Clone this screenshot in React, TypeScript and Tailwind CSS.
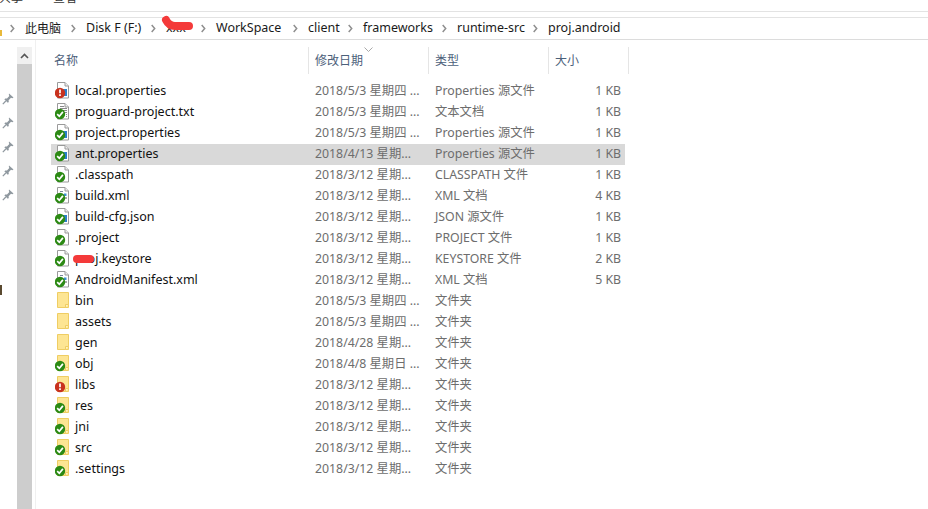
import React from "react";

type Kind = "props" | "txt" | "blank" | "xml" | "json" | "folder";
type Badge = "ok" | "err" | null;

const files: { name: React.ReactNode; date: string; type: string; size: string; kind: Kind; badge: Badge; selected?: boolean }[] = [
  { name: "local.properties", date: "2018/5/3 星期四 ...", type: "Properties 源文件", size: "1 KB", kind: "props", badge: "err" },
  { name: "proguard-project.txt", date: "2018/5/3 星期四 ...", type: "文本文档", size: "1 KB", kind: "txt", badge: "ok" },
  { name: "project.properties", date: "2018/5/3 星期四 ...", type: "Properties 源文件", size: "1 KB", kind: "props", badge: "ok" },
  { name: "ant.properties", date: "2018/4/13 星期...", type: "Properties 源文件", size: "1 KB", kind: "props", badge: "ok", selected: true },
  { name: ".classpath", date: "2018/3/12 星期...", type: "CLASSPATH 文件", size: "1 KB", kind: "blank", badge: "ok" },
  { name: "build.xml", date: "2018/3/12 星期...", type: "XML 文档", size: "4 KB", kind: "xml", badge: "ok" },
  { name: "build-cfg.json", date: "2018/3/12 星期...", type: "JSON 源文件", size: "1 KB", kind: "props", badge: "ok" },
  { name: ".project", date: "2018/3/12 星期...", type: "PROJECT 文件", size: "1 KB", kind: "blank", badge: "ok" },
  { name: "proj.keystore", date: "2018/3/12 星期...", type: "KEYSTORE 文件", size: "2 KB", kind: "blank", badge: "ok" },
  { name: "AndroidManifest.xml", date: "2018/3/12 星期...", type: "XML 文档", size: "5 KB", kind: "xml", badge: "ok" },
  { name: "bin", date: "2018/5/3 星期四 ...", type: "文件夹", size: "", kind: "folder", badge: null },
  { name: "assets", date: "2018/5/3 星期四 ...", type: "文件夹", size: "", kind: "folder", badge: null },
  { name: "gen", date: "2018/4/28 星期...", type: "文件夹", size: "", kind: "folder", badge: null },
  { name: "obj", date: "2018/4/8 星期日 ...", type: "文件夹", size: "", kind: "folder", badge: "ok" },
  { name: "libs", date: "2018/3/12 星期...", type: "文件夹", size: "", kind: "folder", badge: "err" },
  { name: "res", date: "2018/3/12 星期...", type: "文件夹", size: "", kind: "folder", badge: "ok" },
  { name: "jni", date: "2018/3/12 星期...", type: "文件夹", size: "", kind: "folder", badge: "ok" },
  { name: "src", date: "2018/3/12 星期...", type: "文件夹", size: "", kind: "folder", badge: "ok" },
  { name: ".settings", date: "2018/3/12 星期...", type: "文件夹", size: "", kind: "folder", badge: "ok" },
];

const crumbs = [
  { label: "此电脑", width: "w-[36px] text-[12px]" },
  { label: "Disk F (F:)", width: "w-[55px]" },
  { label: "xxx", width: "w-[25px]" },
  { label: "WorkSpace", width: "w-[67px]" },
  { label: "client", width: "w-[30px]" },
  { label: "frameworks", width: "w-[69px]" },
  { label: "runtime-src", width: "w-[66px]" },
  { label: "proj.android", width: "w-[73px]" },
];
const headers = [
  { label: "修改日期", width: "w-[120px]" },
  { label: "类型", width: "w-[120px]" },
  { label: "大小", width: "w-[80px]" },
];

const Chevron = () => (
  <svg width="5" height="9" viewBox="0 0 5 9" className="shrink-0">
    <path d="M0.7 1l3 3.5-3 3.5" fill="none" stroke="#8f8f8f" strokeWidth="1.5" />
  </svg>
);

const Pin = () => (
  <svg width="12" height="12" viewBox="0 0 12 12">
    <path d="M7 0.5l4.5 4-1.2.7-1.3-.4L6.6 7.2l.2 1.8-1 .8L2.4 6.4l.8-1 1.8.2 2.3-2.5-.5-1.4z" fill="#8f989f" />
    <path d="M3.8 8L0.8 11.2" stroke="#8f989f" strokeWidth="1.2" />
  </svg>
);

const FileIcon = ({ kind, badge }: { kind: Kind; badge: Badge }) => (
  <svg width="16" height="19" viewBox="0 1 16 19" className="shrink-0">
    {kind === "folder" ? (
      <g>
        <path d="M2.5 1.5h11v15h-11z" fill="#fde593" stroke="#efcd63" />
        <path d="M10.5 16.5v-3h3" fill="#fff3c4" stroke="#efcd63" />
      </g>
    ) : (
      <g>
        <path d="M2.5 1.5h7.5l3.5 3.5v12h-11z" fill="#fff" stroke="#9a9a9a" />
        <path d="M10 1.5v3.5h3.5" fill="#eee" stroke="#9a9a9a" />
      </g>
    )}
    {kind === "props" && <rect x="8" y="8" width="4" height="7" fill="#2a7fc9" />}
    {kind === "txt" && <path d="M5 4.5h4M5 6.5h7M5 8.5h7M8 10.5h4M11 12.5h1M11 14.5h1" stroke="#8a8a8a" strokeWidth="1" />}
    {kind === "xml" && (
      <g>
        <path d="M5 5.5h3M4.5 8h3" stroke="#7a8a9a" strokeWidth="1" />
        <path d="M9 7.5h2.5v2.5H9z" fill="#3a8fd0" />
        <path d="M10 12h2" stroke="#555" strokeWidth="1" />
      </g>
    )}
    {badge === "ok" && (
      <g>
        <circle cx="5" cy="12" r="5.2" fill="#2c8a14" />
        <path d="M2.2 12.2l2.1 2.1 3.6-4.400" fill="none" stroke="#fff" strokeWidth="1.7" />
      </g>
    )}
    {badge === "err" && (
      <g>
        <circle cx="5" cy="12" r="5.2" fill="#c8321e" />
        <path d="M5 8.500v3.800M5 13.300v1.800" stroke="#fff" strokeWidth="1.7" />
      </g>
    )}
  </svg>
);

export default function App() {
  return (
    <div className="relative flex h-[509px] w-[928px] flex-col overflow-hidden bg-white font-['Noto_Sans','Noto_Sans_CJK_SC',sans-serif] text-[12.5px]">
      {/* ribbon tabs, cut off by the crop */}
      <div className="flex h-[11px] items-end gap-[28px] overflow-hidden pb-[7px] text-[12px] leading-none text-[#333]">
        <span className="-ml-[1px] w-[26px]">共享</span>
        <span>查看</span>
      </div>
      <div className="h-[7px] border-y border-[#e3e3e3]" />

      {/* address bar */}
      <div className="flex h-[22px] items-center gap-[10px] border-b border-[#dcdcdc] text-[#1a1a1a]">
        <div className="-mr-[2px] mt-[8px] h-[6px] w-[2px] bg-[#e8b93a]" />
        {crumbs.map((crumb) => (
          <React.Fragment key={crumb.label}>
            <Chevron />
            <span className={`${crumb.width} whitespace-nowrap`}>{crumb.label}</span>
          </React.Fragment>
        ))}
      </div>

      <div className="flex min-h-0 flex-1">
        {/* pinned column and scrollbar */}
        <div className="flex w-[17px] shrink-0 flex-col gap-[12px] pl-[2px] pt-[53px]">
          {[0, 1, 2, 3, 4].map((i) => (
            <Pin key={i} />
          ))}
        </div>
        <div className="mt-[7px] flex w-[15px] shrink-0 flex-col bg-[#cdcdcd]">
          <div className="flex h-[17px] items-center justify-center bg-[#f0f0f0]">
            <svg width="9" height="6" viewBox="0 0 9 6">
              <path d="M1 5l3.5-3.5L8 5" fill="none" stroke="#555" strokeWidth="1.6" />
            </svg>
          </div>
        </div>
        <div className="ml-[3px] w-px shrink-0 bg-[#f0f0f0]" />

        <div className="flex flex-col pl-[15px]">
          {/* column headers */}
          <div className="mt-[7px] flex h-[27px] text-[12px] text-[#4c607a]">
            <div className="flex w-[258px] items-center border-r border-[#e5e5e5] pl-[3px]">名称</div>
            {headers.map((h) => (
              <div key={h.label} className={`flex ${h.width} items-center border-r border-[#e5e5e5] pl-[6px]`}>
                {h.label}
              </div>
            ))}
          </div>
          {/* file rows */}
          <div className="mt-[7px] flex w-[574px] flex-col">
            {files.map((f) => (
              <div key={f.date + f.type + String(f.name)} className={`flex h-[21px] items-center pl-[4px] ${f.selected ? "bg-[#d9d9d9]" : ""}`}>
                <FileIcon kind={f.kind} badge={f.badge} />
                <span className="ml-[4px] w-[240px] whitespace-nowrap text-[#111]">{f.name}</span>
                <span className="w-[120px] whitespace-nowrap text-[12.3px] text-[#6d6d6d]">{f.date}</span>
                <span className="w-[120px] whitespace-nowrap text-[12.3px] text-[#6d6d6d]">{f.type}</span>
                <span className="w-[66px] whitespace-nowrap text-right text-[12.3px] text-[#6d6d6d]">{f.size}</span>
              </div>
            ))}
          </div>
        </div>
      </div>

      {/* clipped glyph at the left edge */}
      <div className="absolute left-0 top-[285px] h-[10px] w-[2px] bg-[#5a4a30]" />

      {/* sort arrow over the date column */}
      <svg width="9" height="5" viewBox="0 0 9 5" className="absolute left-[364px] top-[47px]">
        <path d="M0.5 0.5l4 4 4-4" fill="none" stroke="#a9a9a9" />
      </svg>

      {/* red marker strokes over the private names */}
      <svg width="928" height="509" viewBox="0 0 928 509" className="pointer-events-none absolute left-0 top-0">
        <path d="M166 20c2 4 5 6 9 6s10 0 14 0" fill="none" stroke="#f43a3a" strokeWidth="8" strokeLinecap="round" />
        <path d="M77 259h13" fill="none" stroke="#f43a3a" strokeWidth="8" strokeLinecap="round" />
      </svg>
    </div>
  );
}
